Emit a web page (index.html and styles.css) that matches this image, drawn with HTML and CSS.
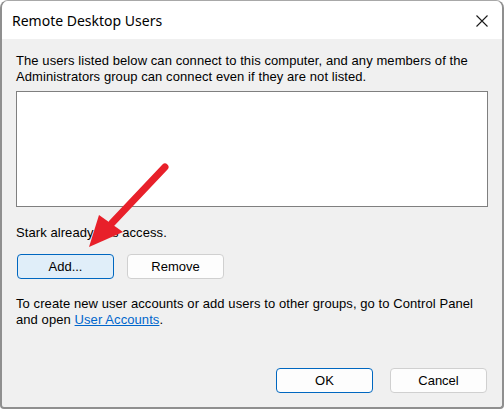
FILE: index.html
```html
<!DOCTYPE html>
<html>
<head>
<meta charset="utf-8">
<link rel="stylesheet" href="styles.css">
</head>
<body>
<div class="window">
  <div class="titlebar">
    <span class="title">Remote Desktop Users</span>
    <svg class="close" width="12" height="12" viewBox="0 0 12 12"><path d="M0.5 0.5 L11.5 11.5 M11.5 0.5 L0.5 11.5" stroke="#1a1a1a" stroke-width="1.1" fill="none"/></svg>
  </div>
  <div class="content">
    <p class="intro">The users listed below can connect to this computer, and any members of the Administrators group can connect even if they are not listed.</p>
    <div class="listbox"></div>
    <p class="status">Stark already has access.</p>
    <div class="row">
      <button class="btn btn-focus">Add...</button>
      <button class="btn">Remove</button>
    </div>
    <p class="info">To create new user accounts or add users to other groups, go to Control Panel and open <a href="#" class="link">User Accounts</a>.</p>
    <div class="footer">
      <button class="btn btn-default">OK</button>
      <button class="btn">Cancel</button>
    </div>
  </div>
</div>
<svg class="arrow" width="504" height="411" viewBox="0 0 504 411">
  <line x1="165" y1="167" x2="112" y2="223" stroke="#e8202a" stroke-width="7" stroke-linecap="round"/>
  <polygon points="89,247 99,215 123,232" fill="#e8202a"/>
</svg>
</body>
</html>
```
FILE: styles.css
```css
html, body {
  margin: 0;
  padding: 0;
  background: #ffffff;
}
body {
  width: 504px;
  height: 411px;
  overflow: hidden;
  position: relative;
  font-family: "Liberation Sans", Arial, sans-serif;
  font-size: 13px;
  color: #000;
}
.window {
  box-sizing: border-box;
  width: 504px;
  height: 409px;
  border: 2px solid #8f8f8f;
  border-top: 1px solid #a8a8a8;
  border-radius: 8px 8px 4px 4px;
  background: #f0f0f0;
  display: flex;
  flex-direction: column;
  overflow: hidden;
}
.titlebar {
  height: 38px;
  flex: none;
  background: #ffffff;
  display: flex;
  align-items: center;
  justify-content: space-between;
  padding: 0 14px 0 10px;
}
.title {
  font-family: "Noto Sans", "Open Sans", sans-serif;
  font-size: 14px;
  color: #000;
  margin-top: 1px;
}
.close {
  display: block;
  margin-top: 1px;
}
.content {
  flex: 1;
  display: flex;
  flex-direction: column;
  padding: 0 14px;
  line-height: 16px;
  letter-spacing: 0.08px;
}
.intro {
  margin: 14px 0 0 0;
}
.listbox {
  margin-top: 6px;
  height: 114px;
  background: #fff;
  border: 1px solid #7f7f7f;
}
.status {
  margin: 18px 0 0 0;
}
.row {
  display: flex;
  gap: 13px;
  margin-top: 13px;
  padding-left: 1px;
}
.btn {
  box-sizing: border-box;
  width: 97px;
  height: 25px;
  border: 1px solid #d0d0d0;
  border-radius: 4px;
  background: #fdfdfd;
  font-family: "Liberation Sans", Arial, sans-serif;
  font-size: 13px;
  color: #000;
  padding: 0;
}
.btn-focus {
  background: #e0eef9;
  border-color: #0067c0;
}
.btn-default {
  border-color: #0067c0;
}
.info {
  margin: 17px 0 0 0;
}
.link {
  color: #0066cc;
  text-decoration: underline;
}
.footer {
  display: flex;
  justify-content: flex-end;
  gap: 17px;
  margin-top: 40px;
  padding-right: 1px;
}
.arrow {
  position: absolute;
  left: 0;
  top: 0;
  pointer-events: none;
}
```
